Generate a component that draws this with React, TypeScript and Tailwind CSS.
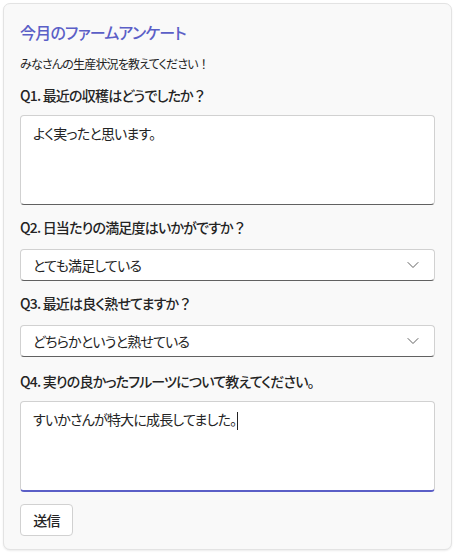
const font = "font-['Segoe_UI','Noto_Sans_CJK_JP',sans-serif] [font-feature-settings:'palt'] tracking-[-0.05em]";

// full-width punctuation keeps its normal width, as in the reference
const Wide = ({ children }: { children: React.ReactNode }) => (
  <span className="[font-feature-settings:normal] tracking-normal">{children}</span>
);

const Chevron = () => (
  <svg width="14" height="14" viewBox="0 0 14 14" fill="none" className="text-[#616161]">
    <path d="M2 4.5L7 9.5L12 4.5" stroke="currentColor" strokeWidth="1" strokeLinecap="round" strokeLinejoin="round" />
  </svg>
);

const Label = ({ children, className = '' }: { children: React.ReactNode; className?: string }) => (
  <div className={`text-[14px] leading-[20px] font-medium text-[#242424] ${className}`}>{children}</div>
);

const Select = ({ value, className = '' }: { value: string; className?: string }) => (
  <div
    className={`h-[32px] flex items-center justify-between pl-[12px] pr-[14px] bg-white rounded-[4px] border border-[#d1d1d1] border-b-[#616161] ${className}`}
  >
    <span className="text-[14px] text-[#242424]">{value}</span>
    <Chevron />
  </div>
);

export default function App() {
  return (
    <div className={`w-[455px] h-[555px] bg-white pt-[3px] pl-[3px] ${font}`}>
      <div className="w-[449px] bg-[#f9f9f9] border border-[#e3e3e3] rounded-[7px] shadow-[0_1px_2px_rgba(0,0,0,0.08)] px-[16px] pt-[16px] pb-[13px]">
        <h1 className="text-[16px] leading-[24px] font-medium text-[#5b5fc7]">今月のファームアンケート</h1>
        <p className="mt-[11px] text-[12px] leading-[18px] text-[#242424]">
          みなさんの生産状況を教えてください<Wide>！</Wide>
        </p>

        <Label className="mt-[12px]">Q1. 最近の収穫はどうでしたか<Wide>？</Wide></Label>
        <div className="mt-[10px] h-[90px] bg-white rounded-[4px] border border-[#d1d1d1] border-b-[#616161] px-[12px] pt-[7px] text-[14px] leading-[20px] text-[#242424]">
          よく実ったと思います。
        </div>

        <Label className="mt-[12px]">Q2. 日当たりの満足度はいかがですか<Wide>？</Wide></Label>
        <Select value="とても満足している" className="mt-[12px]" />

        <Label className="mt-[12px]">Q3. 最近は良く熟せてますか<Wide>？</Wide></Label>
        <Select value="どちらかというと熟せている" className="mt-[12px]" />

        <Label className="mt-[14px]">Q4. 実りの良かったフルーツについて教えてください。</Label>
        <div className="mt-[10px] h-[91px] bg-white rounded-[4px] border border-[#d1d1d1] border-b-2 border-b-[#5b5fc7] px-[12px] pt-[7px] text-[14px] leading-[20px] text-[#242424]">
          すいかさんが特大に成長してました。
          <span className="inline-block w-px h-[18px] bg-[#242424] align-middle ml-px" />
        </div>

        <button className="mt-[12px] h-[32px] w-[53px] bg-white rounded-[4px] border border-[#d1d1d1] text-[14px] font-medium text-[#242424]">
          送信
        </button>
      </div>
    </div>
  );
}
